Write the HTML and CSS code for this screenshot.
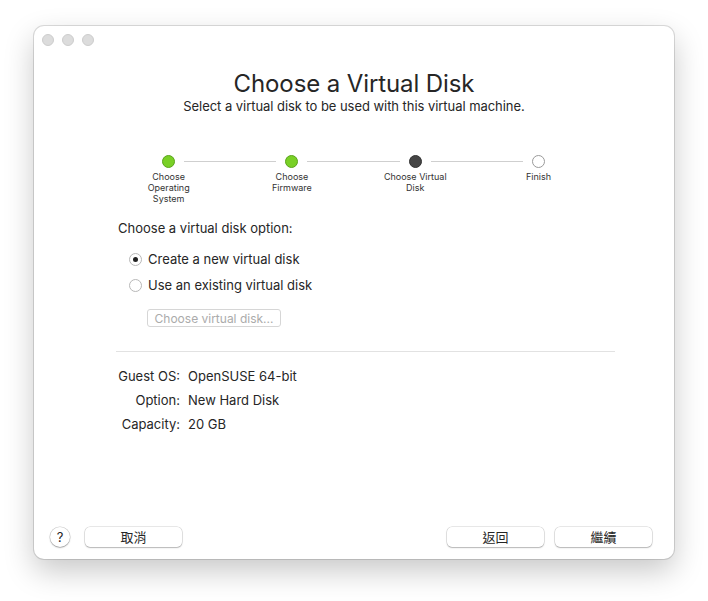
FILE: index.html
```html
<!DOCTYPE html>
<html>
<head>
<meta charset="utf-8">
<link rel="stylesheet" href="styles.css">
</head>
<body>
<div class="window">
  <div class="titlebar">
    <span class="light"></span><span class="light"></span><span class="light"></span>
  </div>
  <header class="head">
    <h1 class="title">Choose a Virtual Disk</h1>
    <p class="subtitle">Select a virtual disk to be used with this virtual machine.</p>
  </header>
  <ol class="steps">
    <li class="step first">
      <div class="track"><span class="line"></span><span class="dot done"></span><span class="line"></span></div>
      <div class="label">Choose<br>Operating<br>System</div>
    </li>
    <li class="step">
      <div class="track"><span class="line"></span><span class="dot done"></span><span class="line"></span></div>
      <div class="label">Choose<br>Firmware</div>
    </li>
    <li class="step">
      <div class="track"><span class="line"></span><span class="dot current"></span><span class="line"></span></div>
      <div class="label">Choose Virtual<br>Disk</div>
    </li>
    <li class="step last">
      <div class="track"><span class="line"></span><span class="dot todo"></span><span class="line"></span></div>
      <div class="label">Finish</div>
    </li>
  </ol>
  <section class="content">
    <div class="prompt">Choose a virtual disk option:</div>
    <div class="radios">
      <label class="radio"><span class="knob checked"></span>Create a new virtual disk</label>
      <label class="radio"><span class="knob"></span>Use an existing virtual disk</label>
    </div>
    <button class="pick" disabled>Choose virtual disk...</button>
    <div class="sep"></div>
    <div class="info">
      <span class="k">Guest OS:</span><span class="v">OpenSUSE 64-bit</span>
      <span class="k">Option:</span><span class="v">New Hard Disk</span>
      <span class="k">Capacity:</span><span class="v">20 GB</span>
    </div>
  </section>
  <footer class="footer">
    <button class="help">?</button>
    <button class="btn">取消</button>
    <span class="spacer"></span>
    <button class="btn">返回</button>
    <button class="btn">繼續</button>
  </footer>
</div>
</body>
</html>
```
FILE: styles.css
```css
* { box-sizing: border-box; }
html, body { margin: 0; padding: 0; background: #ffffff; }
body {
  width: 708px;
  height: 601px;
  padding: 26px 0 0 34px;
  font-family: "Inter", "Liberation Sans", "Noto Sans CJK TC", sans-serif;
  color: #262626;
}
.window {
  width: 640px;
  height: 533px;
  background: #ffffff;
  border-radius: 10px;
  box-shadow: 0 0 0 1px rgba(0,0,0,0.13), 0 12px 30px rgba(0,0,0,0.22);
  display: flex;
  flex-direction: column;
}
.titlebar {
  height: 28px;
  padding: 8px 0 0 8px;
  display: flex;
  gap: 8px;
}
.light {
  width: 12px;
  height: 12px;
  border-radius: 50%;
  background: #dcdcdc;
  border: 1px solid #cdcdcd;
}
.head {
  margin-top: 16px;
  text-align: center;
}
.title {
  margin: 0;
  font-size: 24px;
  line-height: 28px;
  font-weight: 400;
  letter-spacing: -0.1px;
  color: #262626;
}
.subtitle {
  margin: 0;
  font-size: 13px;
  line-height: 16px;
  letter-spacing: -0.05px;
  color: #262626;
}
.steps {
  list-style: none;
  margin: 41px 0 0 73px;
  padding: 0;
  display: flex;
}
.step {
  width: 123.3px;
  display: flex;
  flex-direction: column;
  align-items: center;
}
.track {
  width: 100%;
  height: 13px;
  display: flex;
  align-items: center;
}
.line {
  flex: 1;
  height: 1px;
  background: #cfcfcf;
}
.track .line:first-child { margin-right: 9px; }
.track .line:last-child { margin-left: 9px; }
.first .line:first-child, .last .line:last-child { background: transparent; }
.dot {
  width: 13px;
  height: 13px;
  border-radius: 50%;
  flex: none;
}
.dot.done { background: #79d026; border: 1px solid #5aa41b; }
.dot.current { background: #454545; border: 1px solid #333333; }
.dot.todo { background: #ffffff; border: 1px solid #9a9a9a; }
.label {
  margin-top: 3px;
  font-size: 9px;
  line-height: 11px;
  text-align: center;
  color: #333333;
}
.content {
  margin: 16px 59px 0 82px;
  display: flex;
  flex-direction: column;
  align-items: flex-start;
}
.prompt {
  margin-left: 2px;
  font-size: 13px;
  line-height: 16px;
}
.radios {
  margin-top: 15px;
  display: flex;
  flex-direction: column;
  gap: 10px;
}
.radio {
  display: flex;
  align-items: center;
  gap: 6px;
  margin-left: 13px;
  font-size: 13px;
  line-height: 16px;
}
.knob {
  width: 13px;
  height: 13px;
  border-radius: 50%;
  border: 1px solid #b8b8b8;
  background: #fff;
  display: flex;
  align-items: center;
  justify-content: center;
}
.knob.checked::after {
  content: "";
  width: 5px;
  height: 5px;
  border-radius: 50%;
  background: #222;
}
.pick {
  margin: 16px 0 0 31px;
  width: 134px;
  height: 18px;
  padding: 0;
  font-family: inherit;
  font-size: 12px;
  color: #ababab;
  background: #fff;
  border: 1px solid #d6d6d6;
  border-radius: 3px;
}
.sep {
  align-self: stretch;
  margin-top: 24px;
  height: 1px;
  background: #e2e2e2;
}
.info {
  margin-top: 16px;
  display: grid;
  grid-template-columns: 64px auto;
  column-gap: 8px;
  row-gap: 8px;
  font-size: 13px;
  line-height: 16px;
}
.info .k { text-align: right; }
.footer {
  margin-top: auto;
  padding: 0 22px 12px 16px;
  display: flex;
  align-items: center;
}
.help {
  width: 20px;
  height: 20px;
  padding: 0;
  border-radius: 50%;
  border: none;
  background: #fff;
  box-shadow: 0 0 0 0.5px rgba(0,0,0,0.2), 0 1px 1.5px rgba(0,0,0,0.25);
  font-family: inherit;
  font-size: 13px;
  color: #262626;
  margin-right: 15px;
}
.btn {
  width: 97px;
  height: 20px;
  padding: 0;
  border: none;
  border-radius: 5px;
  background: #fff;
  box-shadow: 0 0 0 0.5px rgba(0,0,0,0.18), 0 1px 1.5px rgba(0,0,0,0.22);
  font-family: "Noto Sans CJK TC", sans-serif;
  font-size: 13px;
  line-height: 20px;
  color: #262626;
}
.spacer { flex: 1; }
.footer .btn + .btn { margin-left: 11px; }
```
